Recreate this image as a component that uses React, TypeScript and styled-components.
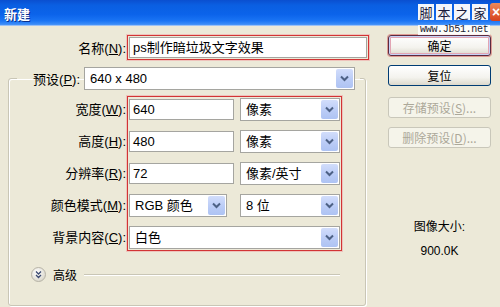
import styled, { createGlobalStyle } from 'styled-components';

const GlobalStyle = createGlobalStyle`
  html, body {
    margin: 0;
    padding: 0;
    background: #ece9d8;
  }
  body {
    font-family: "Liberation Sans", "Noto Sans CJK SC", sans-serif;
    font-size: 13px;
    color: #000;
  }
`;

type RowProps = { label: string; mnemonic: string };

const sizeRows = [
  { label: '宽度', mnemonic: 'W' },
  { label: '高度', mnemonic: 'H' },
  { label: '分辨率', mnemonic: 'R' },
  { label: '颜色模式', mnemonic: 'M' },
  { label: '背景内容', mnemonic: 'C' },
];

function LabelText({ label, mnemonic }: RowProps) {
  return (
    <>
      {label}(<u>{mnemonic}</u>):
    </>
  );
}

function ArrowIcon() {
  return (
    <svg width='9' height='7' viewBox='0 0 9 7'>
      <path d='M1 1.5 L4.5 5 L8 1.5' fill='none' stroke='#4d6185' strokeWidth='2' />
    </svg>
  );
}

function Combo({ value, width }: { value: string; width: number }) {
  return (
    <ComboBox $width={width}>
      <ComboValue>{value}</ComboValue>
      <ComboArrow>
        <ArrowIcon />
      </ComboArrow>
    </ComboBox>
  );
}

export default function App() {
  return (
    <>
      <GlobalStyle />
      <Window>
        <TitleBar>
          <TitleText>新建</TitleText>
          <Watermark>
            <LogoChars>
              {['脚', '本', '之', '家'].map((c) => (
                <LogoChar key={c}>{c}</LogoChar>
              ))}
              <CloseMark>×</CloseMark>
            </LogoChars>
            <LogoUrl>www.Jb51.net</LogoUrl>
          </Watermark>
        </TitleBar>
        <Body>
          <LeftPane>
            <NameRow>
              <NameLabel>
                <LabelText label='名称' mnemonic='N' />
              </NameLabel>
              <RedBox>
                <TextField $width={238}>ps制作暗垃圾文字效果</TextField>
              </RedBox>
            </NameRow>
            <GroupBox>
              <Legend>
                <LegendLabel>
                  <LabelText label='预设' mnemonic='P' />
                </LegendLabel>
                <Combo value='640 x 480' width={271} />
              </Legend>
              <FieldsGrid>
                <LabelColumn>
                  {sizeRows.map((r) => (
                    <FieldLabel key={r.mnemonic}>
                      <LabelText label={r.label} mnemonic={r.mnemonic} />
                    </FieldLabel>
                  ))}
                </LabelColumn>
                <RedBox>
                  <ControlColumn>
                    <ControlRow>
                      <TextField $width={105}>640</TextField>
                      <Combo value='像素' width={100} />
                    </ControlRow>
                    <ControlRow>
                      <TextField $width={105}>480</TextField>
                      <Combo value='像素' width={100} />
                    </ControlRow>
                    <ControlRow>
                      <TextField $width={105}>72</TextField>
                      <Combo value='像素/英寸' width={100} />
                    </ControlRow>
                    <ControlRow>
                      <Combo value='RGB 颜色' width={98} />
                      <Combo value='8 位' width={100} />
                    </ControlRow>
                    <ControlRow>
                      <Combo value='白色' width={211} />
                    </ControlRow>
                  </ControlColumn>
                </RedBox>
              </FieldsGrid>
              <AdvancedRow>
                <ExpandIcon>
                  <svg width='15' height='15' viewBox='0 0 15 15'>
                    <defs>
                      <radialGradient id='knob' cx='40%' cy='35%' r='70%'>
                        <stop offset='0' stopColor='#ffffff' />
                        <stop offset='1' stopColor='#d8d5c8' />
                      </radialGradient>
                    </defs>
                    <circle cx='7.5' cy='7.5' r='7' fill='url(#knob)' stroke='#b6b3a6' />
                    <path d='M5 4.5 L7.5 7 L10 4.5 M5 8 L7.5 10.5 L10 8' fill='none' stroke='#3b4a72' strokeWidth='1.3' />
                  </svg>
                </ExpandIcon>
                <AdvancedText>高级</AdvancedText>
                <Divider />
              </AdvancedRow>
            </GroupBox>
          </LeftPane>
          <RightPane>
            <DialogButton $focused>确定</DialogButton>
            <DialogButton>复位</DialogButton>
            <DialogButton $disabled $extraTop={2}>
              存储预设(<u>S</u>)...
            </DialogButton>
            <DialogButton $disabled>
              删除预设(<u>D</u>)...
            </DialogButton>
            <SizeInfo>
              <span>图像大小:</span>
              <span>900.0K</span>
            </SizeInfo>
          </RightPane>
        </Body>
      </Window>
    </>
  );
}

const Window = styled.div`
  width: 500px;
  height: 307px;
  overflow: hidden;
  background: #ece9d8;
  display: flex;
  flex-direction: column;
`;

const TitleBar = styled.div`
  position: relative;
  height: 26px;
  flex-shrink: 0;
  display: flex;
  align-items: center;
  padding-left: 4px;
  background: linear-gradient(
    to bottom,
    #0a4fd0 0%,
    #0a5fe2 20%,
    #0b63ea 55%,
    #1a74f4 80%,
    #3d8ef8 94%,
    #c9d9f4 100%
  );
`;

const TitleText = styled.span`
  color: #fff;
  font-family: "Noto Sans CJK SC", sans-serif;
  font-weight: 700;
  font-size: 13px;
  text-shadow: 1px 1px 0 #0a2f8a;
`;

const Watermark = styled.div`
  position: absolute;
  top: 3px;
  right: 0;
  width: 82px;
  display: flex;
  flex-direction: column;
  align-items: flex-start;
  z-index: 2;
`;

const LogoChars = styled.div`
  display: flex;
  gap: 2px;
  align-items: center;
`;

const LogoChar = styled.span`
  width: 16px;
  height: 16px;
  display: flex;
  align-items: center;
  justify-content: center;
  background: #f4f6fb;
  color: #1a1a3a;
  font-family: "Noto Sans CJK SC", sans-serif;
  font-size: 13px;
  line-height: 1;
`;

const CloseMark = styled.span`
  width: 12px;
  height: 18px;
  border-radius: 3px 0 0 3px;
  background: linear-gradient(#f08a5a, #d6411c);
  color: #fff;
  font-size: 14px;
  font-weight: 700;
  line-height: 18px;
  text-align: center;
`;

const LogoUrl = styled.span`
  margin-top: 4px;
  padding: 0 2px;
  background: rgba(255, 255, 255, 0.85);
  color: #223;
  font-family: "Liberation Mono", monospace;
  font-size: 10px;
  line-height: 10px;
  letter-spacing: -0.3px;
`;

const Body = styled.div`
  display: flex;
  padding-top: 9px;
`;

const LeftPane = styled.div`
  width: 370px;
  padding-left: 8px;
  box-sizing: border-box;
`;

const NameRow = styled.div`
  display: flex;
  align-items: center;
`;

const NameLabel = styled.span`
  width: 118px;
  text-align: right;
  margin-right: 1px;
  white-space: nowrap;
`;

const RedBox = styled.div`
  border: 1px solid #d23434;
  box-shadow: 0 0 0 1px rgba(240, 170, 170, 0.6);
  padding: 1px;
`;

const TextField = styled.div<{ $width: number }>`
  width: ${(p) => p.$width}px;
  height: 21px;
  box-sizing: border-box;
  border: 1px solid #a5a5a0;
  background: #fff;
  padding-left: 3px;
  line-height: 19px;
  font-family: "Liberation Sans", "Noto Sans CJK SC", sans-serif;
  white-space: nowrap;
  overflow: hidden;
`;

const ComboBox = styled.div<{ $width: number }>`
  width: ${(p) => p.$width}px;
  height: 23px;
  box-sizing: border-box;
  border: 1px solid #a5a5a0;
  background: #fff;
  display: flex;
  align-items: stretch;
`;

const ComboValue = styled.span`
  flex: 1;
  padding-left: 5px;
  line-height: 21px;
  white-space: nowrap;
  overflow: hidden;
`;

const ComboArrow = styled.span`
  width: 17px;
  margin: 1px;
  border-radius: 2px;
  background: linear-gradient(to bottom, #d2ddfb, #b9cbf6 60%, #aec3f3);
  display: flex;
  align-items: center;
  justify-content: center;
`;

const GroupBox = styled.fieldset`
  margin: 7px 0 0;
  padding: 0 0 22px;
  width: 358px;
  box-sizing: border-box;
  border: 1px solid #c9c6b6;
  border-radius: 3px;
  box-shadow: inset 1px 1px 0 #fff, 1px 1px 0 #fff;
`;

const Legend = styled.legend`
  margin-left: 8px;
  padding: 0 5px 0 0;
  display: flex;
  align-items: center;
`;

const LegendLabel = styled.span`
  width: 63px;
  margin-right: 4px;
  text-align: right;
  white-space: nowrap;
`;

const FieldsGrid = styled.div`
  display: flex;
  align-items: flex-start;
  margin-top: 6px;
`;

const LabelColumn = styled.div`
  width: 117px;
  margin-right: 1px;
  padding-top: 2px;
  display: flex;
  flex-direction: column;
  gap: 9px;
`;

const FieldLabel = styled.span`
  height: 23px;
  line-height: 23px;
  text-align: right;
  white-space: nowrap;
`;

const ControlColumn = styled.div`
  display: flex;
  flex-direction: column;
  gap: 9px;
`;

const ControlRow = styled.div`
  display: flex;
  align-items: center;
  justify-content: space-between;
  width: 211px;
`;

const AdvancedRow = styled.div`
  display: flex;
  align-items: center;
  margin-top: 15px;
  padding-left: 22px;
  padding-right: 25px;
`;

const ExpandIcon = styled.span`
  width: 15px;
  height: 15px;
  display: flex;
`;

const AdvancedText = styled.span`
  margin-left: 7px;
  font-family: "Noto Sans CJK SC", sans-serif;
  font-size: 12px;
`;

const Divider = styled.span`
  flex: 1;
  margin-left: 7px;
  height: 0;
  border-top: 1px solid #c9c6b6;
  border-bottom: 1px solid #fff;
`;

const RightPane = styled.div`
  width: 103px;
  margin-left: 18px;
  display: flex;
  flex-direction: column;
  gap: 9px;
`;

const DialogButton = styled.div<{ $focused?: boolean; $disabled?: boolean; $extraTop?: number }>`
  height: 21px;
  box-sizing: border-box;
  margin-top: ${(p) => p.$extraTop ?? 0}px;
  border: 1px solid ${(p) => (p.$disabled ? '#c9c7ba' : p.$focused ? '#5b2a40' : '#003c74')};
  border-radius: 3px;
  background: ${(p) =>
    p.$disabled ? '#f5f4ea' : 'linear-gradient(to bottom, #ffffff, #f4f3ee 60%, #dcd9cc)'};
  box-shadow: ${(p) =>
    p.$focused
      ? 'inset 0 0 0 1px #c6d3f7, inset 0 0 0 2px #e2a5b4, 0 0 0 1px rgba(210, 80, 80, 0.5)'
      : 'none'};
  color: ${(p) => (p.$disabled ? '#aca899' : '#000')};
  font-family: "Noto Sans CJK SC", sans-serif;
  font-size: 12px;
  line-height: 19px;
  text-align: center;
  white-space: nowrap;
`;

const SizeInfo = styled.div`
  margin-top: 62px;
  display: flex;
  flex-direction: column;
  align-items: center;
  gap: 8px;
  font-size: 12px;
  line-height: 16px;
`;
